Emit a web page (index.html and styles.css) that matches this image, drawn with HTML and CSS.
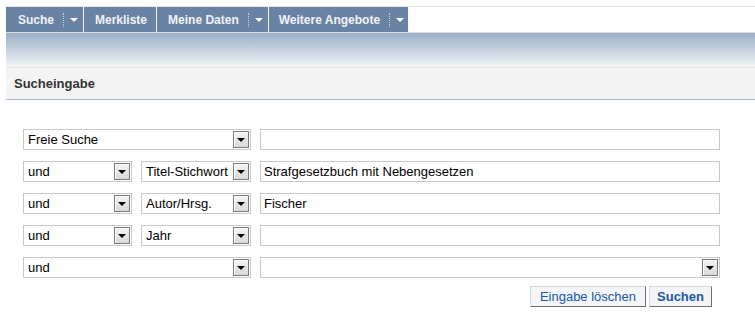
FILE: index.html
```html
<!DOCTYPE html>
<html lang="de">
    <head>
        <meta charset="UTF-8" />
        <title>Sucheingabe</title>
        <link rel="stylesheet" href="styles.css">
    </head>
    <body>
        <div class="page">
            <header class="top">
                <ul class="nav">
                    <li><a href="#">Suche</a><span class="split"></span><span class="caret"></span></li>
                    <li><a href="#">Merkliste</a></li>
                    <li><a href="#">Meine Daten</a><span class="split"></span><span class="caret"></span></li>
                    <li><a href="#">Weitere Angebote</a><span class="split"></span><span class="caret"></span></li>
                </ul>
                <div class="band"></div>
                <h2 class="title">Sucheingabe</h2>
            </header>

            <form class="search">
                <div class="grid">
                    <div class="select wide"><span>Freie Suche</span><i class="drop"></i></div>
                    <input class="text" type="text" value="" />

                    <div class="select"><span>und</span><i class="drop"></i></div>
                    <div class="select"><span>Titel-Stichwort</span><i class="drop"></i></div>
                    <input class="text" type="text" value="Strafgesetzbuch mit Nebengesetzen" />

                    <div class="select"><span>und</span><i class="drop"></i></div>
                    <div class="select"><span>Autor/Hrsg.</span><i class="drop"></i></div>
                    <input class="text" type="text" value="Fischer" />

                    <div class="select"><span>und</span><i class="drop"></i></div>
                    <div class="select"><span>Jahr</span><i class="drop"></i></div>
                    <input class="text" type="text" value="" />

                    <div class="select wide"><span>und</span><i class="drop"></i></div>
                    <div class="select"><span></span><i class="drop"></i></div>
                </div>
                <div class="actions">
                    <button type="reset" class="btn">Eingabe löschen</button>
                    <button type="submit" class="btn strong">Suchen</button>
                </div>
            </form>
        </div>
    </body>
</html>
```

FILE: styles.css
```css
body {
    margin: 0;
    font-family: "Liberation Sans", Arial, sans-serif;
    color: #000;
}

.page {
    padding: 6px 0 0 6px;
}

/* top navigation */
.nav {
    display: flex;
    margin: 0;
    padding: 0;
    list-style: none;
    height: 25px;
    border-top: 1px solid #e4e4e4;
    border-bottom: 1px solid #dedede;
}
.nav li {
    display: flex;
    align-items: center;
    background-color: #6983a5;
    border-right: 1px solid #f4f6f9;
    padding: 0 5px 0 11px;
}
.nav li:nth-child(1) {
    padding-left: 12px;
}
.nav li:nth-child(2) {
    padding-right: 9px;
}
.nav li:nth-child(4) {
    padding-left: 10px;
    padding-right: 4px;
}
.nav a {
    color: #f1f3f7;
    font-size: 12px;
    font-weight: bold;
    text-decoration: none;
}
.nav .split {
    width: 0;
    height: 14px;
    border-left: 1px dotted #c9d3e1;
    margin: 0 6px 0 9px;
}
.nav .caret {
    width: 0;
    height: 0;
    border-left: 4px solid transparent;
    border-right: 4px solid transparent;
    border-top: 4px solid #ffffff;
    margin-top: 1px;
}

.band {
    height: 34px;
    background: linear-gradient(#9aaec8, #c6d1df 50%, #f5f6f8);
    border-bottom: 1px solid #e2e2e2;
}

.title {
    margin: 0;
    height: 31px;
    line-height: 31px;
    padding-left: 8px;
    background-color: #f4f4f4;
    border-bottom: 1px solid #a9b8cb;
    font-size: 13px;
    font-weight: bold;
    color: #333;
}

/* search form */
.search {
    margin: 29px 0 0 17px;
    font-size: 13px;
}
.grid {
    display: grid;
    grid-template-columns: 109px 110px 460px;
    grid-auto-rows: 21px;
    column-gap: 9px;
    row-gap: 11px;
}
.select,
.text {
    box-sizing: border-box;
    height: 21px;
    border: 1px solid #c9c9c9;
    background: #fff;
}
.select {
    display: flex;
    align-items: center;
    justify-content: space-between;
    padding: 0 1px 0 4px;
    white-space: nowrap;
}
.select.wide {
    grid-column: span 2;
}
.text {
    margin: 0;
    padding: 0 3px;
    font-family: "Liberation Sans", Arial, sans-serif;
    font-size: 13px;
    color: #000;
    outline: none;
}
.drop {
    box-sizing: border-box;
    flex: none;
    display: flex;
    align-items: center;
    justify-content: center;
    width: 16px;
    height: 17px;
    margin-left: 2px;
    border: 1px solid #7b7b7b;
    box-shadow: inset 1px 1px 0 #ffffff;
    background: linear-gradient(#f4f4f4, #d9d9d9);
}
.drop::before {
    content: "";
    width: 0;
    height: 0;
    border-left: 4px solid transparent;
    border-right: 4px solid transparent;
    border-top: 4px solid #000;
    margin-top: 1px;
}

.actions {
    display: flex;
    justify-content: flex-end;
    gap: 3px;
    width: 689px;
    margin-top: 8px;
}
.btn {
    height: 21px;
    padding: 0 9px;
    font-family: "Liberation Sans", Arial, sans-serif;
    font-size: 13px;
    color: #2157a6;
    background: #f3f5f8;
    border: 1px solid;
    border-color: #d6d6d6 #6f6f6f #6f6f6f #d6d6d6;
}
.btn.strong {
    font-weight: bold;
    padding: 0 7px;
}
```
